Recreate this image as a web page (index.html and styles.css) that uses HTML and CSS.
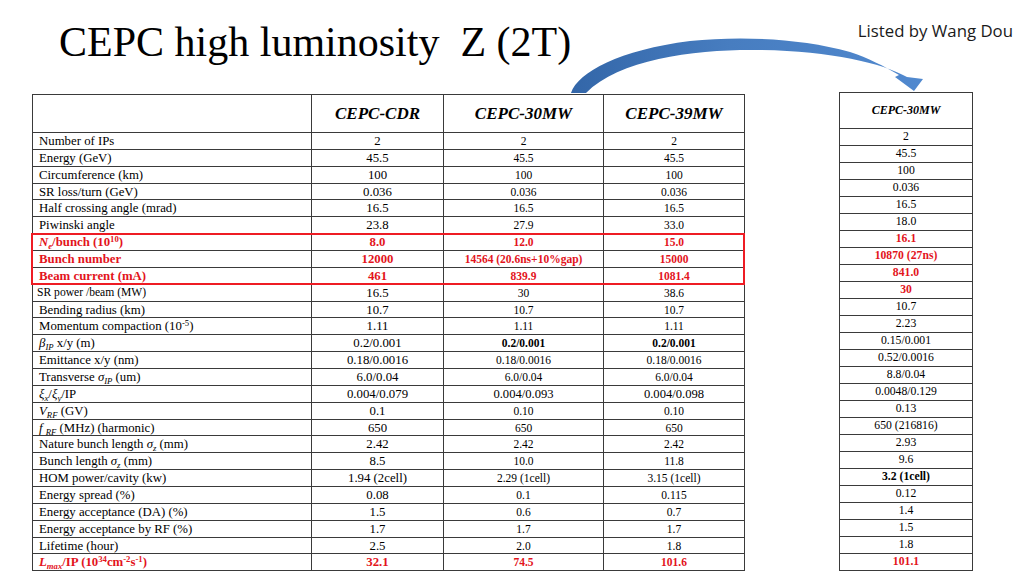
FILE: index.html
```html
<!DOCTYPE html>
<html lang="en">
<head>
<meta charset="utf-8">
<title>CEPC high luminosity Z (2T)</title>
<link rel="stylesheet" href="styles.css">
</head>
<body>
<div class="slide">
  <header class="top">
    <h1 class="title">CEPC high luminosity  Z (2T)</h1>
    <div class="credit">Listed by Wang Dou</div>
  </header>

  <svg class="arrow" width="1024" height="120" viewBox="0 0 1024 120" aria-hidden="true">
    <defs>
      <linearGradient id="ag" x1="570" y1="0" x2="925" y2="0" gradientUnits="userSpaceOnUse">
        <stop offset="0" stop-color="#3366a8"/>
        <stop offset="0.45" stop-color="#477dc0"/>
        <stop offset="1" stop-color="#5189cf"/>
      </linearGradient>
    </defs>
    <path fill="url(#ag)" d="M571,93 C578,72 620,50 690,41 C740,36 800,38 850,52 C868,58 884,66 899,75 L895,77 L914,91 L923,79 L907,77 C882,63 830,51 760,50 C700,49 620,58 586,93 Z"/>
  </svg>

  <main class="tables">
    <div class="main-wrap">
      <table class="main">
        <colgroup>
          <col class="c-lbl"><col class="c-cdr"><col class="c-30"><col class="c-39">
        </colgroup>
        <thead>
          <tr><th></th><th>CEPC-CDR</th><th>CEPC-30MW</th><th>CEPC-39MW</th></tr>
        </thead>
        <tbody>
          <tr><td class="lbl">Number of IPs</td><td class="cdr">2</td><td class="v">2</td><td class="v">2</td></tr>
          <tr><td class="lbl">Energy (GeV)</td><td class="cdr">45.5</td><td class="v">45.5</td><td class="v">45.5</td></tr>
          <tr><td class="lbl">Circumference (km)</td><td class="cdr">100</td><td class="v">100</td><td class="v">100</td></tr>
          <tr><td class="lbl">SR loss/turn (GeV)</td><td class="cdr">0.036</td><td class="v">0.036</td><td class="v">0.036</td></tr>
          <tr><td class="lbl">Half crossing angle (mrad)</td><td class="cdr">16.5</td><td class="v">16.5</td><td class="v">16.5</td></tr>
          <tr><td class="lbl">Piwinski angle</td><td class="cdr">23.8</td><td class="v">27.9</td><td class="v">33.0</td></tr>
          <tr class="red"><td class="lbl"><i>N<sub>e</sub></i>/bunch (10<sup>10</sup>)</td><td class="cdr">8.0</td><td class="v">12.0</td><td class="v">15.0</td></tr>
          <tr class="red"><td class="lbl">Bunch number</td><td class="cdr">12000</td><td class="v">14564 (20.6ns+10%gap)</td><td class="v">15000</td></tr>
          <tr class="red"><td class="lbl">Beam current (mA)</td><td class="cdr">461</td><td class="v">839.9</td><td class="v">1081.4</td></tr>
          <tr><td class="lbl sm">SR power /beam (MW)</td><td class="cdr">16.5</td><td class="v">30</td><td class="v">38.6</td></tr>
          <tr><td class="lbl">Bending radius (km)</td><td class="cdr">10.7</td><td class="v">10.7</td><td class="v">10.7</td></tr>
          <tr><td class="lbl">Momentum compaction (10<sup>-5</sup>)</td><td class="cdr">1.11</td><td class="v">1.11</td><td class="v">1.11</td></tr>
          <tr><td class="lbl"><i>β<sub>IP</sub></i> x/y (m)</td><td class="cdr">0.2/0.001</td><td class="v b">0.2/0.001</td><td class="v b">0.2/0.001</td></tr>
          <tr><td class="lbl">Emittance  x/y (nm)</td><td class="cdr">0.18/0.0016</td><td class="v">0.18/0.0016</td><td class="v">0.18/0.0016</td></tr>
          <tr><td class="lbl">Transverse  <i>σ<sub>IP</sub></i> (um)</td><td class="cdr">6.0/0.04</td><td class="v">6.0/0.04</td><td class="v">6.0/0.04</td></tr>
          <tr><td class="lbl"><i>ξ<sub>x</sub></i>/<i>ξ<sub>y</sub></i>/IP</td><td class="cdr">0.004/0.079</td><td class="v lg">0.004/0.093</td><td class="v lg">0.004/0.098</td></tr>
          <tr><td class="lbl"><i>V<sub>RF</sub></i> (GV)</td><td class="cdr">0.1</td><td class="v">0.10</td><td class="v">0.10</td></tr>
          <tr><td class="lbl"><i>f <sub>RF</sub></i> (MHz)  (harmonic)</td><td class="cdr">650</td><td class="v">650</td><td class="v">650</td></tr>
          <tr><td class="lbl">Nature bunch length <i>σ<sub>z</sub></i> (mm)</td><td class="cdr">2.42</td><td class="v">2.42</td><td class="v">2.42</td></tr>
          <tr><td class="lbl">Bunch length <i>σ<sub>z</sub></i> (mm)</td><td class="cdr">8.5</td><td class="v">10.0</td><td class="v">11.8</td></tr>
          <tr><td class="lbl">HOM power/cavity (kw)</td><td class="cdr">1.94 (2cell)</td><td class="v">2.29 (1cell)</td><td class="v">3.15 (1cell)</td></tr>
          <tr><td class="lbl">Energy spread (%)</td><td class="cdr">0.08</td><td class="v">0.1</td><td class="v">0.115</td></tr>
          <tr><td class="lbl">Energy acceptance (DA) (%)</td><td class="cdr">1.5</td><td class="v">0.6</td><td class="v">0.7</td></tr>
          <tr><td class="lbl">Energy acceptance by RF (%)</td><td class="cdr">1.7</td><td class="v">1.7</td><td class="v">1.7</td></tr>
          <tr><td class="lbl">Lifetime (hour)</td><td class="cdr">2.5</td><td class="v">2.0</td><td class="v">1.8</td></tr>
          <tr class="red"><td class="lbl"><i>L<sub>max</sub></i>/IP (10<sup>34</sup>cm<sup>-2</sup>s<sup>-1</sup>)</td><td class="cdr">32.1</td><td class="v">74.5</td><td class="v">101.6</td></tr>
        </tbody>
      </table>
      <div class="hl-box"></div>
    </div>

    <table class="side">
      <thead>
        <tr><th>CEPC-30MW</th></tr>
      </thead>
      <tbody>
        <tr><td>2</td></tr>
        <tr><td>45.5</td></tr>
        <tr><td>100</td></tr>
        <tr><td>0.036</td></tr>
        <tr><td>16.5</td></tr>
        <tr><td>18.0</td></tr>
        <tr class="red"><td>16.1</td></tr>
        <tr class="red"><td>10870 (27ns)</td></tr>
        <tr class="red"><td>841.0</td></tr>
        <tr class="red"><td>30</td></tr>
        <tr><td>10.7</td></tr>
        <tr><td>2.23</td></tr>
        <tr><td>0.15/0.001</td></tr>
        <tr><td>0.52/0.0016</td></tr>
        <tr><td>8.8/0.04</td></tr>
        <tr><td>0.0048/0.129</td></tr>
        <tr><td>0.13</td></tr>
        <tr><td>650 (216816)</td></tr>
        <tr><td>2.93</td></tr>
        <tr><td>9.6</td></tr>
        <tr><td class="b">3.2 (1cell)</td></tr>
        <tr><td>0.12</td></tr>
        <tr><td>1.4</td></tr>
        <tr><td>1.5</td></tr>
        <tr><td>1.8</td></tr>
        <tr class="red"><td>101.1</td></tr>
      </tbody>
    </table>
  </main>
</div>
</body>
</html>
```

FILE: styles.css
```css
html, body {
  margin: 0;
  padding: 0;
  background: #ffffff;
}

body {
  font-family: "Liberation Serif", "Times New Roman", serif;
  color: #000;
}

.slide {
  position: relative;
  width: 1024px;
  height: 576px;
  overflow: hidden;
}

.top {
  display: flex;
  align-items: flex-start;
  height: 92px;
}

.title {
  margin: 0;
  padding: 21px 0 0 59px;
  font-family: "Liberation Serif", "Times New Roman", serif;
  font-size: 42px;
  line-height: 42px;
  font-weight: normal;
  white-space: pre;
  color: #000;
}

.credit {
  margin-left: auto;
  padding: 19px 11px 0 0;
  font-family: "Open Sans", "Liberation Sans", sans-serif;
  font-size: 16.8px;
  line-height: 24px;
  color: #1a1a1a;
}

.arrow {
  position: absolute;
  left: 0;
  top: 0;
  pointer-events: none;
  z-index: 2;
}

.tables {
  display: flex;
  align-items: flex-start;
}

.main-wrap {
  position: relative;
  margin: 2px 0 0 32px;
}

table {
  border-collapse: collapse;
  table-layout: fixed;
}

th, td {
  border: 1px solid #3a3a3a;
  padding: 0;
  text-align: center;
  vertical-align: middle;
  white-space: nowrap;
  overflow: hidden;
}

.main {
  width: 712px;
}

.c-lbl { width: 279px; }
.c-cdr { width: 132px; }
.c-30 { width: 160px; }
.c-39 { width: 141px; }

.main thead tr { height: 38px; }
.main th {
  font-size: 17px;
  font-weight: bold;
  font-style: italic;
}

.main tbody tr { height: 16.86px; }

.main td {
  font-size: 11.5px;
  line-height: 12px;
}

.main td.lbl {
  text-align: left;
  padding-left: 6px;
  font-size: 12.8px;
}

.main td.lbl.sm {
  font-size: 11.6px;
  padding-left: 4px;
}

.main td.cdr {
  font-size: 12.8px;
}

.main td.lg {
  font-size: 12.6px;
}

sub, sup {
  font-size: 0.68em;
  line-height: 0;
}

sub { vertical-align: -0.3em; }
sup { vertical-align: 0.45em; }

.b { font-weight: bold; }

.red td {
  color: #e3141c;
  font-weight: bold;
}

.hl-box {
  position: absolute;
  left: -1px;
  top: 139px;
  width: 710px;
  height: 48px;
  border: 2px solid #ee1c24;
  pointer-events: none;
}

.side {
  width: 134px;
  margin-left: 94px;
}

.side thead tr { height: 36px; }
.side th {
  font-size: 12px;
  font-weight: bold;
  font-style: italic;
}

.side tbody tr { height: 17px; }

.side td {
  font-size: 11.7px;
  line-height: 12px;
}
```
